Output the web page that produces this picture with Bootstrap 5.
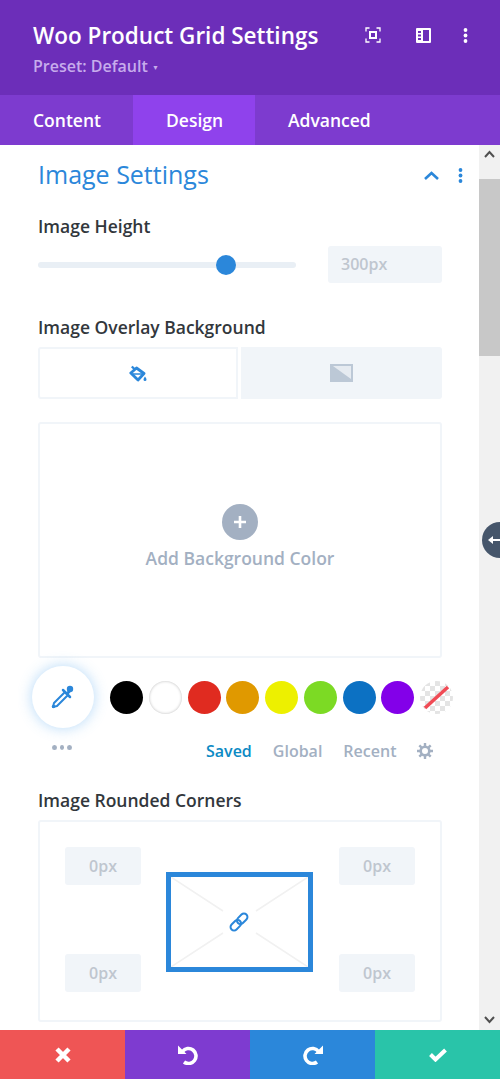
<!DOCTYPE html>
<html lang="en">
<head>
<meta charset="utf-8">
<title>Woo Product Grid Settings</title>
<link href="https://cdn.jsdelivr.net/npm/bootstrap@5.3.0/dist/css/bootstrap.min.css" rel="stylesheet">
<style>
html,body{height:1079px;overflow:hidden;background:#fff;}
body{font-family:"Open Sans","Liberation Sans",sans-serif;font-weight:600;color:#32373c;position:relative;}
.pg-head{height:95px;background:#6c2eb9;padding:20px 32px 0 33px;color:#fff;}
.pg-title{font-size:22.5px;line-height:32px;margin:0;font-weight:600;}
.pg-preset{font-size:16px;line-height:22px;color:#c7acec;margin-top:3px;}
.pg-caret{font-size:7px;vertical-align:2px;}
.pg-heads-ico{margin-top:7px;}
.pg-tabs{height:50px;background:#7d3bcf;}
.pg-tab{color:#fff;font-size:17.5px;line-height:50px;padding-left:33px;}
.pg-tab-1{width:133px;}
.pg-tab-2{width:122px;background:#8f42ec;}
.pg-body{height:885px;}
.pg-main{width:479px;height:885px;overflow:hidden;padding:0 37px 0 38px;}
.pg-bar{width:21px;height:885px;background:#f1f1f1;}
.pg-thumb{height:177px;background:#c8c8c8;margin-top:34px;}
.pg-sect{font-size:25px;line-height:34px;color:#2b87da;font-weight:400;margin:12px 0 1px;}
.pg-sect-tools{margin:13px -21px 0 0;width:39px;}
.pg-lab{font-size:17.5px;line-height:22px;margin:0;font-weight:600;color:#32373c;}
.pg-slide{width:404px;margin-top:9px;}
.pg-track{width:258px;height:6px;background:#e9eff5;border-radius:3px;position:relative;}
.pg-knob{position:absolute;left:178px;top:-7px;width:20px;height:20px;border-radius:50%;background:#2b87da;}
.pg-inp{background:#f1f5f9;border-radius:3px;color:#bfc6cf;font-size:16px;}
.pg-inp-w{width:114px;height:37px;line-height:37px;padding-left:13px;}
.pg-corner{width:76px;height:38px;line-height:38px;text-align:center;}
.pg-seg{height:52px;gap:3px;margin-top:9px;}
.pg-seg-a{width:200px;border:2px solid #f1f5f9;border-radius:3px 0 0 3px;}
.pg-seg-b{width:201px;background:#f1f5f9;border-radius:0 3px 3px 0;}
.pg-panel{width:404px;border:2px solid #f1f5f9;border-radius:3px;}
.pg-color{height:236px;margin-top:23px;}
.pg-plus{width:36px;height:36px;border-radius:50%;background:#a3b0c2;margin-top:80px;}
.pg-add{font-size:17.5px;line-height:24px;color:#a3b0c2;margin-top:6px;}
.pg-pal{margin:8px 0 0 -6px;height:62px;}
.pg-drop{width:62px;height:62px;border-radius:50%;background:#fff;box-shadow:0 0 14px rgba(90,170,240,.45);}
.pg-swatches{gap:5.75px;margin-left:16px;}
.pg-sw{width:33px;height:33px;border-radius:50%;}
.pg-clear{background:repeating-conic-gradient(#e4e4e4 0 25%,#fff 0 50%) 0 0/10px 10px;}
.pg-dots{gap:3px;margin:17px 0 0 14px;width:20px;}
.pg-dots i{display:block;width:5px;height:5px;border-radius:50%;background:#a3b0c2;}
.pg-lib{font-size:16px;line-height:22px;color:#a3b0c2;margin-top:-10px;padding-left:168px;gap:21px;}
.pg-lib .on{color:#0c8ac4;}
.pg-radius{height:202px;margin-top:9px;padding:25px 25px 0;display:grid;grid-template-columns:76px 1fr 76px;grid-template-rows:38px 69px 38px;}
.pg-prev{grid-column:2;grid-row:1/4;justify-self:center;align-self:center;width:147px;height:100px;border:5px solid #2b87da;margin:5px 2px 0 0;position:relative;}
.pg-tl{grid-column:1;grid-row:1;}
.pg-tr{grid-column:3;grid-row:1;}
.pg-bl{grid-column:1;grid-row:3;}
.pg-br{grid-column:3;grid-row:3;}
.pg-foot{height:49px;}
.pg-btn{width:125px;height:49px;}
.pg-red{background:#ef5555;}
.pg-pur{background:#7e3bd0;}
.pg-blu{background:#2b87da;}
.pg-grn{background:#29c4a9;}
.pg-handle{left:482px;top:522px;width:36px;height:36px;border-radius:50%;background:#46566b;padding-left:6px;}
.pg-ico-a{margin-right:35px;}
.pg-ico-b{margin-right:32px;}
.pg-up{left:5px;top:5px;}
.pg-down{left:5px;top:871px;}
</style>
</head>
<body>
<header class="pg-head d-flex justify-content-between align-items-start">
  <div>
    <h1 class="pg-title">Woo Product Grid Settings</h1>
    <div class="pg-preset">Preset: Default <span class="pg-caret">▼</span></div>
  </div>
  <div class="d-flex align-items-center pg-heads-ico">
    <svg class="pg-ico-a" width="16" height="16" viewBox="0 0 16 16" fill="none" stroke="#fff" stroke-width="1.300"><path d="M1 4.500V1h3.500M11.500 1H15v3.500M15 11.500V15h-3.500M4.500 15H1v-3.500"/><rect x="5" y="5" width="6" height="6" stroke-width="2"/></svg>
    <svg class="pg-ico-b" width="15" height="15" viewBox="0 0 15 15"><path fill="#fff" fill-rule="evenodd" d="M1 0h13a1 1 0 0 1 1 1v13a1 1 0 0 1-1 1H1a1 1 0 0 1-1-1V1a1 1 0 0 1 1-1zM7 2v11h6V2zM2 3v2h3V3zM2 6.500v2h3v-2zM2 10v2h3v-2z"/></svg>
    <svg width="5" height="15" viewBox="0 0 5 15" fill="#fff"><circle cx="2.500" cy="2" r="1.900"/><circle cx="2.500" cy="7.500" r="1.900"/><circle cx="2.500" cy="13" r="1.900"/></svg>
  </div>
</header>
<nav class="pg-tabs d-flex">
  <div class="pg-tab pg-tab-1">Content</div>
  <div class="pg-tab pg-tab-2">Design</div>
  <div class="pg-tab">Advanced</div>
</nav>
<div class="pg-body d-flex">
  <main class="pg-main">
    <div class="d-flex justify-content-between align-items-center">
      <h2 class="pg-sect">Image Settings</h2>
      <div class="pg-sect-tools d-flex align-items-center justify-content-between">
        <svg width="15" height="9" viewBox="0 0 15 9" fill="none" stroke="#2b87da" stroke-width="2.600"><path d="M1 8l6.500-6L14 8"/></svg>
        <svg width="5" height="15" viewBox="0 0 5 15" fill="#2b87da"><circle cx="2.500" cy="2" r="1.900"/><circle cx="2.500" cy="7.500" r="1.900"/><circle cx="2.500" cy="13" r="1.900"/></svg>
      </div>
    </div>
    <p class="pg-lab" style="margin-top:23px">Image Height</p>
    <div class="pg-slide d-flex align-items-center justify-content-between">
      <div class="pg-track"><div class="pg-knob"></div></div>
      <div class="pg-inp pg-inp-w">300px</div>
    </div>
    <p class="pg-lab" style="margin-top:33px">Image Overlay Background</p>
    <div class="pg-seg d-flex">
      <div class="pg-seg-a d-flex align-items-center justify-content-center">
        <svg width="18" height="17" viewBox="0 0 18 17" fill="none"><path d="M2.800 1.500L7.500 6" stroke="#2b87da" stroke-width="2.400"/><path d="M1.800 8L7.500 3l7.500 5.500-6 6.500z" fill="#fff" stroke="#2b87da" stroke-width="2.800" stroke-linejoin="round"/><path d="M4 9h9" stroke="#2b87da" stroke-width="1.500"/><path d="M16 11.500c1 1.500 1.500 2.200 1.500 3a1.500 1.500 0 0 1-3 0c0-.8.500-1.500 1.500-3z" fill="#2b87da"/></svg>
      </div>
      <div class="pg-seg-b d-flex align-items-center justify-content-center">
        <svg width="23" height="18" viewBox="0 0 23 18"><rect width="23" height="18" fill="#bcc8d6"/><path d="M3 2h18v13z" fill="#e6ebf1"/></svg>
      </div>
    </div>
    <div class="pg-panel pg-color d-flex flex-column align-items-center">
      <div class="pg-plus d-flex align-items-center justify-content-center">
        <svg width="12" height="12" viewBox="0 0 12 12" fill="#fff"><path d="M4.700 0h2.600v4.700H12v2.600H7.300V12H4.700V7.300H0V4.700h4.700z"/></svg>
      </div>
      <div class="pg-add">Add Background Color</div>
    </div>
    <div class="pg-pal d-flex align-items-center">
      <div class="pg-drop d-flex align-items-center justify-content-center flex-shrink-0">
        <svg width="26" height="26" viewBox="0 0 26 26" fill="none"><path d="M3 23l1-4L15 8l3 3L7 22z" stroke="#2b87da" stroke-width="2" stroke-linejoin="round"/><path d="M13 6l7 7" stroke="#2b87da" stroke-width="2.500" stroke-linecap="round"/><path d="M16 9l5-6 2 2-5 6z" fill="#2b87da"/><circle cx="20" cy="5" r="3.200" fill="#2b87da"/><circle cx="3.500" cy="22.500" r="1.700" fill="#2b87da"/></svg>
      </div>
      <div class="pg-swatches d-flex">
        <div class="pg-sw" style="background:#000"></div>
        <div class="pg-sw" style="background:#fff;box-shadow:inset 0 0 3px #bbb"></div>
        <div class="pg-sw" style="background:#e02b20"></div>
        <div class="pg-sw" style="background:#e09900"></div>
        <div class="pg-sw" style="background:#edf000"></div>
        <div class="pg-sw" style="background:#7cda24"></div>
        <div class="pg-sw" style="background:#0c71c3"></div>
        <div class="pg-sw" style="background:#8300e9"></div>
        <div class="pg-sw pg-clear d-flex align-items-center justify-content-center"><svg width="33" height="33" viewBox="0 0 33 33"><path d="M5 27L28 6" stroke="#f04b55" stroke-width="3.500"/></svg></div>
      </div>
    </div>
    <div class="pg-dots d-flex"><i></i><i></i><i></i></div>
    <div class="pg-lib d-flex align-items-center">
      <span class="on">Saved</span><span>Global</span><span>Recent</span>
      <svg width="16" height="16" viewBox="0 0 16 16" fill="none" stroke="#a3b0c2"><circle cx="8" cy="8" r="4.300" stroke-width="2.600"/><path d="M8 0v3M8 13v3M0 8h3M13 8h3M2.300 2.300l2.100 2.100M11.600 11.600l2.100 2.100M2.300 13.700l2.100-2.100M11.600 4.400l2.100-2.100" stroke-width="2.400"/></svg>
    </div>
    <p class="pg-lab" style="margin-top:27px">Image Rounded Corners</p>
    <div class="pg-panel pg-radius">
      <div class="pg-inp pg-corner pg-tl">0px</div>
      <div class="pg-inp pg-corner pg-tr">0px</div>
      <div class="pg-prev d-flex align-items-center justify-content-center">
        <svg class="position-absolute top-0 start-0" width="137" height="90" viewBox="0 0 137 90" fill="none" stroke="#f1f1f1" stroke-width="1.500"><path d="M0 0l52 34M137 0L85 34M0 90l52-34M137 90L85 56"/></svg>
        <svg width="24" height="24" viewBox="0 0 24 24" fill="none" stroke="#2b87da" stroke-width="2"><g transform="rotate(-45 12 12)"><rect x="1.500" y="8.500" width="12" height="7" rx="3.500"/><rect x="10.500" y="8.500" width="12" height="7" rx="3.500"/></g></svg>
      </div>
      <div class="pg-inp pg-corner pg-bl">0px</div>
      <div class="pg-inp pg-corner pg-br">0px</div>
    </div>
  </main>
  <aside class="pg-bar position-relative">
    <svg class="position-absolute pg-up" width="11" height="8" viewBox="0 0 11 8" fill="none" stroke="#505050" stroke-width="2"><path d="M1 7l4.500-5L10 7"/></svg>
    <div class="pg-thumb"></div>
    <svg class="position-absolute pg-down" width="11" height="8" viewBox="0 0 11 8" fill="none" stroke="#505050" stroke-width="2"><path d="M1 1l4.500 5L10 1"/></svg>
  </aside>
</div>
<footer class="pg-foot d-flex">
  <div class="pg-btn pg-red d-flex align-items-center justify-content-center">
    <svg width="16" height="16" viewBox="0 0 16 16" stroke="#fff" stroke-width="4.500"><path d="M2 2l12 12M14 2L2 14"/></svg>
  </div>
  <div class="pg-btn pg-pur d-flex align-items-center justify-content-center">
    <svg width="20" height="21" viewBox="0 0 20 21" fill="none"><path d="M4.500 7.500A7.500 7.500 0 1 1 6 18" stroke="#fff" stroke-width="3.600"/><path d="M0 1.500V10h8.500z" fill="#fff"/></svg>
  </div>
  <div class="pg-btn pg-blu d-flex align-items-center justify-content-center">
    <svg width="20" height="21" viewBox="0 0 20 21" fill="none"><path d="M15.500 7.500A7.500 7.500 0 1 0 14 18" stroke="#fff" stroke-width="3.600"/><path d="M20 1.500V10h-8.500z" fill="#fff"/></svg>
  </div>
  <div class="pg-btn pg-grn d-flex align-items-center justify-content-center">
    <svg width="18" height="14" viewBox="0 0 18 14" fill="none" stroke="#fff" stroke-width="4"><path d="M1.500 6.500L6.500 11.500 16.500 2"/></svg>
  </div>
</footer>
<div class="pg-handle position-absolute d-flex align-items-center">
  <svg width="12" height="10" viewBox="0 0 12 10" fill="#fff"><path d="M0 5l5-4v3h7v2H5v3z"/></svg>
</div>
</body>
</html>
